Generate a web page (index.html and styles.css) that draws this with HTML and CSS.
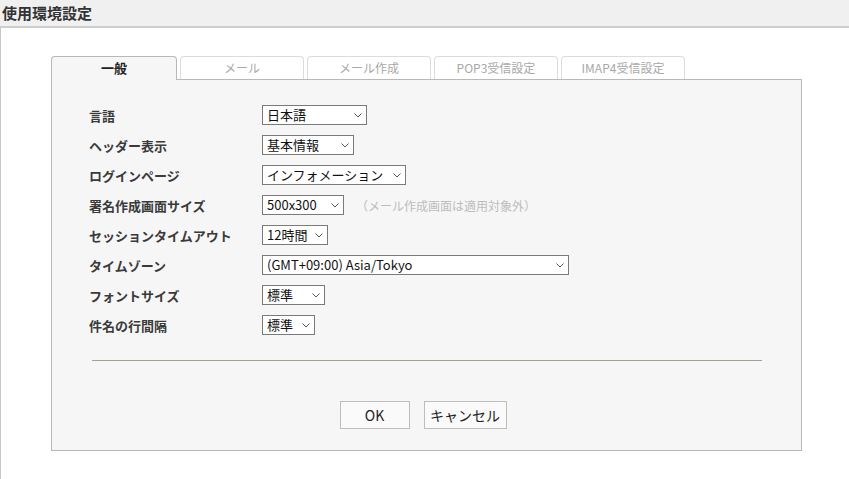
FILE: index.html
```html
<!DOCTYPE html>
<html lang="ja">
<head>
    <meta charset="UTF-8">
    <meta name="viewport" content="width=device-width, initial-scale=1.0">
    <title>使用環境設定</title>
    <link rel="stylesheet" href="styles.css">
</head>
<body>
    <div class="titlebar">
        <h1>使用環境設定</h1>
    </div>
    <div class="page">
        <div class="settings">
            <ul class="tabs">
                <li class="on">一般</li>
                <li>メール</li>
                <li>メール作成</li>
                <li>POP3受信設定</li>
                <li>IMAP4受信設定</li>
            </ul>
            <div class="panel">
                <div class="form">
                    <div class="row">
                        <label>言語</label>
                        <div class="select w-lang"><span>日本語</span><svg width="8" height="5" viewBox="0 0 8 5"><polyline points="0.5,0.5 4,4 7.5,0.5"/></svg></div>
                    </div>
                    <div class="row">
                        <label>ヘッダー表示</label>
                        <div class="select w-header"><span>基本情報</span><svg width="8" height="5" viewBox="0 0 8 5"><polyline points="0.5,0.5 4,4 7.5,0.5"/></svg></div>
                    </div>
                    <div class="row">
                        <label>ログインページ</label>
                        <div class="select w-login"><span>インフォメーション</span><svg width="8" height="5" viewBox="0 0 8 5"><polyline points="0.5,0.5 4,4 7.5,0.5"/></svg></div>
                    </div>
                    <div class="row">
                        <label>署名作成画面サイズ</label>
                        <div class="select w-sign"><span>500x300</span><svg width="8" height="5" viewBox="0 0 8 5"><polyline points="0.5,0.5 4,4 7.5,0.5"/></svg></div>
                        <span class="note">（メール作成画面は適用対象外）</span>
                    </div>
                    <div class="row">
                        <label>セッションタイムアウト</label>
                        <div class="select w-timeout"><span>12時間</span><svg width="8" height="5" viewBox="0 0 8 5"><polyline points="0.5,0.5 4,4 7.5,0.5"/></svg></div>
                    </div>
                    <div class="row">
                        <label>タイムゾーン</label>
                        <div class="select w-zone"><span>(GMT+09:00) Asia/Tokyo</span><svg width="8" height="5" viewBox="0 0 8 5"><polyline points="0.5,0.5 4,4 7.5,0.5"/></svg></div>
                    </div>
                    <div class="row">
                        <label>フォントサイズ</label>
                        <div class="select w-font"><span>標準</span><svg width="8" height="5" viewBox="0 0 8 5"><polyline points="0.5,0.5 4,4 7.5,0.5"/></svg></div>
                    </div>
                    <div class="row">
                        <label>件名の行間隔</label>
                        <div class="select w-line"><span>標準</span><svg width="8" height="5" viewBox="0 0 8 5"><polyline points="0.5,0.5 4,4 7.5,0.5"/></svg></div>
                    </div>
                </div>
                <hr class="line">
                <div class="btns">
                    <button class="btn ok">OK</button>
                    <button class="btn cancel">キャンセル</button>
                </div>
            </div>
        </div>
    </div>
</body>
</html>
```

FILE: styles.css
```css
*{
    margin: 0;
    padding: 0;
    list-style: none;
    box-sizing: border-box;
}
html,body{
    height: 100%;
}
body{
    font-family: "Noto Sans CJK JP", sans-serif;
    color: #333;
    background: #fff;
}
/* 上部タイトル */
.titlebar{
    height: 28px;
    padding: 3px 2px;
    background: #f0f0f0;
    border-bottom: 2px solid #cdcdcd;
}
.titlebar h1{
    font-size: 15px;
    line-height: 20px;
    font-weight: bold;
    color: #333;
}
.page{
    min-height: calc(100% - 28px);
    padding: 28px 0 0 50px;
    border-left: 1px solid #c8c8c8;
}
.settings{
    width: 751px;
}
/* タブ */
.tabs{
    position: relative;
    z-index: 1;
    display: flex;
    align-items: flex-start;
    gap: 3px;
    margin-bottom: -1px;
}
.tabs li{
    width: 124px;
    height: 23px;
    border: 1px solid #dcdcdc;
    border-bottom: 0;
    border-radius: 4px 4px 0 0;
    background: #fff;
    color: #a8a8a8;
    font-size: 12px;
    line-height: 22px;
    text-align: center;
}
.tabs li.on{
    width: 126px;
    height: 24px;
    border-color: #b8b8b8;
    background: #f6f6f6;
    color: #222;
    font-weight: bold;
    font-size: 13px;
}
/* パネル */
.panel{
    height: 372px;
    padding-top: 25px;
    border: 1px solid #b8b8b8;
    background: #f6f6f6;
}
.form{
    display: flex;
    flex-direction: column;
    gap: 10px;
    padding-left: 37px;
}
.row{
    display: flex;
    align-items: center;
    height: 20px;
}
.row label{
    width: 173px;
    font-size: 13px;
    font-weight: bold;
    color: #3a3a3a;
}
.select{
    display: flex;
    align-items: center;
    justify-content: space-between;
    height: 20px;
    padding: 0 4px 0 4px;
    border: 1px solid #7a7a7a;
    background: #fff;
    font-size: 13px;
    line-height: 18px;
    color: #111;
}
.select svg{
    flex: none;
    fill: none;
    stroke: #555;
    stroke-width: 1;
}
.w-lang{ width: 105px; }
.w-header{ width: 92px; }
.w-login{ width: 144px; }
.w-sign{ width: 82px; }
.w-timeout{ width: 66px; }
.w-zone{ width: 307px; }
.w-font{ width: 63px; }
.w-line{ width: 53px; }
.note{
    margin-left: 12px;
    font-size: 12px;
    color: #bcbcbc;
}
.line{
    margin: 25px 39px 0 40px;
    border: 0;
    border-top: 1px solid #a4a38f;
}
/* ボタン */
.btns{
    display: flex;
    justify-content: center;
    gap: 14px;
    margin-top: 40px;
    padding-right: 7px;
}
.btn{
    height: 28px;
    border: 1px solid #bdbdbd;
    background: #fafafa;
    font-family: inherit;
    font-size: 14px;
    color: #222;
}
.btn.ok{
    width: 70px;
}
.btn.cancel{
    width: 83px;
}
```
